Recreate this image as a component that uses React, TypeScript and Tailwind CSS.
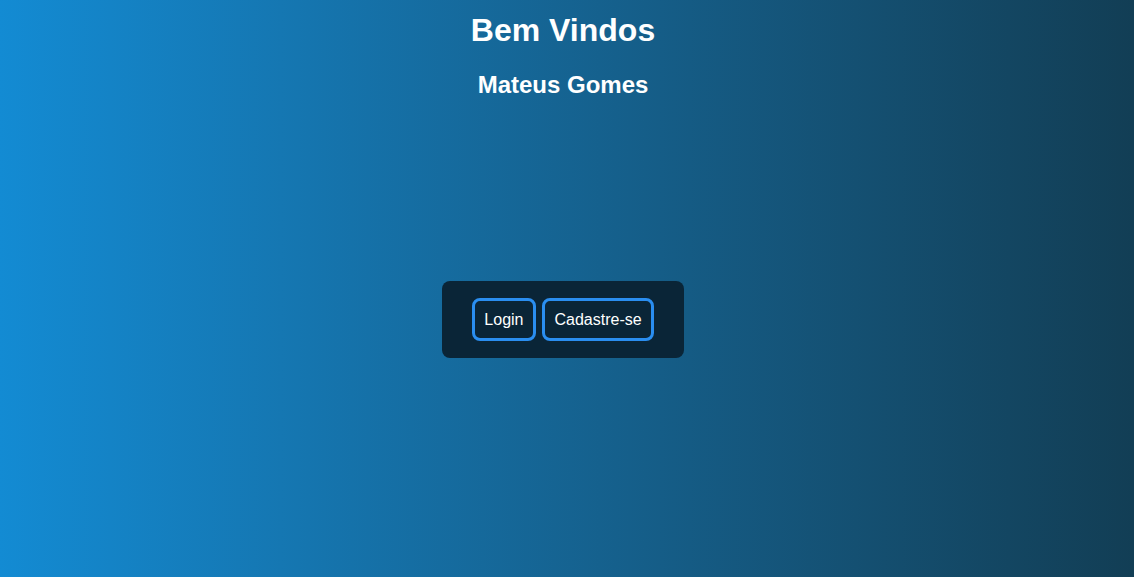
import React from 'react';

const App: React.FC = () => {
  return (
    <div className="min-h-screen w-full bg-gradient-to-r from-[#138bd3] to-[#123e55] font-['Liberation_Sans',Arial,sans-serif] text-white">
      <div className="flex flex-col items-center pt-[12px] pr-[8px]">
        {/* Title */}
        <h1 className="text-[32px] leading-[37px] font-bold">Bem Vindos</h1>
        <h2 className="mt-[22px] text-[24px] leading-[28px] font-bold">Mateus Gomes</h2>

        {/* Buttons box */}
        <div className="mt-[182px] flex gap-[6px] rounded-lg bg-[#0a2537] px-[30px] py-[17px]">
          <button className="h-[43px] rounded-lg border-[3px] border-[#2a8ef0] px-[9.5px] text-[16px] text-white">
            Login
          </button>
          <button className="h-[43px] rounded-lg border-[3px] border-[#2a8ef0] px-[9.5px] text-[16px] text-white">
            Cadastre-se
          </button>
        </div>
      </div>
    </div>
  );
};

export default App;
